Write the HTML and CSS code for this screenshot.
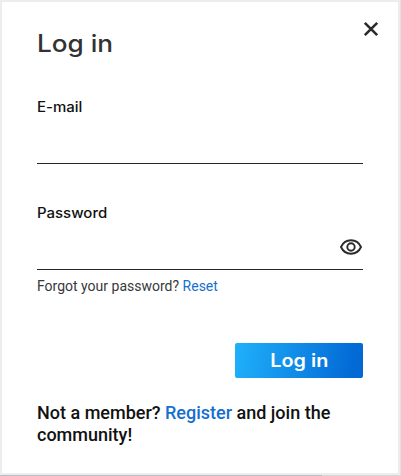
FILE: index.html
```
<!DOCTYPE html>
<html lang="en">
<head>
<meta charset="utf-8">
<title>Log in</title>
<link rel="stylesheet" href="styles.css">
</head>
<body>
<main class="dialog">
  <header class="head">
    <h1 class="title">Log in</h1>
    <button class="close" type="button" aria-label="Close">
      <svg width="16" height="16" viewBox="0 0 16 16"><path d="M1.8 1.8 14.2 14.2M14.2 1.8 1.8 14.2"/></svg>
    </button>
  </header>
  <form class="form">
    <div class="field">
      <label class="label" for="email">E-mail</label>
      <div class="control"><input id="email" type="text"></div>
    </div>
    <div class="field">
      <label class="label" for="password">Password</label>
      <div class="control">
        <input id="password" type="password">
        <svg class="eye" width="22" height="16" viewBox="0 0 22 16"><path d="M1 8C3 3.6 6.500 1.300 11 1.300S19 3.600 21 8C19 12.400 15.500 14.700 11 14.700S3 12.400 1 8Z"/><circle cx="11" cy="8" r="3.700"/></svg>
      </div>
    </div>
    <p class="forgot">Forgot your password? <a href="#">Reset</a></p>
    <button class="submit" type="button"><span>Log in</span></button>
  </form>
  <p class="join">Not a member? <a href="#">Register</a> and join the community!</p>
</main>
</body>
</html>
```
FILE: styles.css
```
* { box-sizing: border-box; }
body {
  margin: 0;
  height: 476px;
  overflow: hidden;
  background: linear-gradient(90deg, #b4bcc8 322px, #d5d7d9 322px);
  font-family: Roboto, sans-serif;
}
h1, p { margin: 0; }
a { color: #146fd1; text-decoration: none; }
button { border: 0; padding: 0; background: none; }
.dialog {
  width: 400px;
  height: 475px;
  padding: 18px 35px 0;
  background: #fff;
  border: 2px solid #ededed;
  box-shadow: 1px 0 0 #dfe1e4;
}
.head {
  display: flex;
  justify-content: space-between;
  height: 74px;
}
.title {
  font: 500 24px/48px Inter, sans-serif;
  color: #323234;
  transform: scaleX(1.09);
  transform-origin: left;
}
.close {
  width: 16px;
  height: 16px;
  margin: 1px -16px 0 0;
}
.close svg { display: block; }
.close path { stroke: #2b2b2d; stroke-width: 2.6; }
.field { height: 106px; }
.label {
  display: block;
  width: max-content;
  font: 500 14px/26px Inter, sans-serif;
  color: #111;
  transform: scaleX(1.07);
  transform-origin: left;
}
.control {
  display: flex;
  align-items: center;
  height: 44px;
  border-bottom: 1px solid #262628;
}
.control input {
  flex: 1;
  min-width: 0;
  height: 30px;
  padding: 0;
  border: 0;
  outline: 0;
  background: none;
}
.eye { margin: -1px 1px 0 0; }
.eye path, .eye circle { fill: none; stroke: #2b2b2d; stroke-width: 1.900; }
.forgot {
  margin-top: -30px;
  font-size: 14px;
  line-height: 20px;
  color: #38383a;
}
.submit {
  display: block;
  width: 128px;
  height: 35px;
  margin: 47px 0 0 auto;
  border-radius: 2px;
  background: linear-gradient(100deg, #20b1fb, #0269d5 92%);
  color: #fff;
  font: 600 18px/35px Inter, sans-serif;
}
.submit span { display: inline-block; transform: scaleX(1.1); }
.join {
  margin-top: 24px;
  font-size: 18px;
  font-weight: 500;
  line-height: 22px;
  color: #111;
}
```
